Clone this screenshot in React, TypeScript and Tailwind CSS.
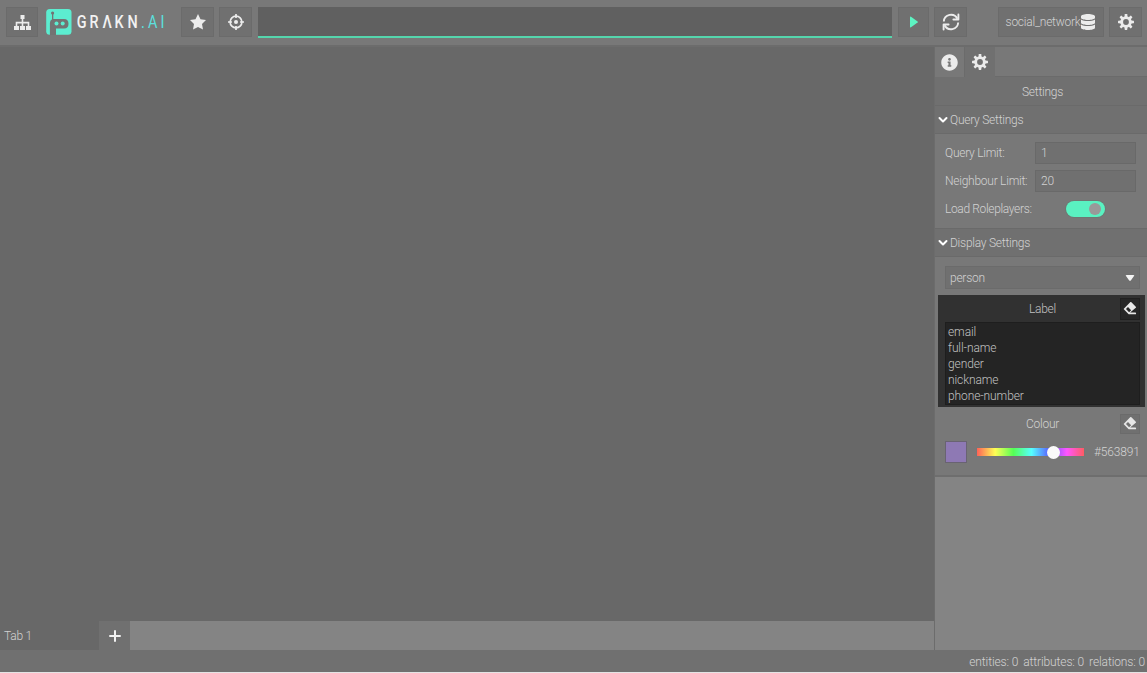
import { ReactNode } from 'react';
import { FaDatabase, FaInfoCircle } from 'react-icons/fa';

function Cog() {
  return (
    <svg width="16" height="16" viewBox="0 0 16 16" className="fill-[#ececec]">
      <path fillRule="evenodd" d="M8 2.200a5.800 5.800 0 1 0 0 11.600A5.800 5.800 0 0 0 8 2.200Zm0 2.900a2.900 2.900 0 1 1 0 5.800 2.900 2.900 0 0 1 0-5.800Z" />
      {[0, 45, 90, 135, 180, 225, 270, 315].map((angle) => (
        <path key={angle} transform={`rotate(${angle} 8 8)`} d="M6.500 3 6.700.4Q6.800 0 7.200 0h1.600q.4 0 .5.400L9.500 3Z" />
      ))}
    </svg>
  );
}

function Eraser() {
  return (
    <svg width="14" height="14" viewBox="0 0 16 16" className="fill-[#e6e6e6]">
      <path fillRule="evenodd" d="M8.2 12H14a1 1 0 0 1 0 2H7a1 1 0 0 1-.8-.3l-5-5a1 1 0 0 1 0-1.4l7-7a1 1 0 0 1 1.400 0l5 5a1 1 0 0 1 0 1.400ZM3.400 8 7 11.600 9.300 9.300 5.700 5.700Z" />
    </svg>
  );
}

function Chevron() {
  return (
    <svg width="10" height="8" viewBox="0 0 10 8" className="fill-none stroke-white stroke-2">
      <path d="m1.500 2 3.500 3.500L8.500 2" strokeLinecap="round" strokeLinejoin="round" />
    </svg>
  );
}

function Logo() {
  return (
    <svg width="120" height="29" viewBox="0 0 120 29">
      <rect x="0.200" y="2" width="25.300" height="25.800" rx="3.500" fill="#5cedd0" />
      <g fill="#737373">
        <circle cx="6.600" cy="6" r="1.600" />
        <path d="M6 6h1.300v6H18q4.500 0 4.500 4.800t-4.500 4.700h-8V28H3.900V16q0-2.800 2.100-3.700Z" />
      </g>
      <circle cx="10.500" cy="16.500" r="2" fill="#5cedd0" />
      <circle cx="16.700" cy="16.500" r="2" fill="#5cedd0" />
      <g transform="scale(.8 1)" fontFamily="Roboto, sans-serif" fontSize="18" fontWeight="500">
        <text x="38.300 54.500 70.500 85.500 102" y="21.500" fill="#f2f2f2">GRΛKN</text>
        <text x="118.900 127.500 143" y="21.500" fill="#5ce0df" fontWeight="400">.AI</text>
      </g>
    </svg>
  );
}

function ToolButton({ label, className = 'w-8', children }: { label: string; className?: string; children: ReactNode }) {
  return (
    <button aria-label={label} className={`flex h-[30px] shrink-0 items-center justify-center border border-[#6b6b6b] bg-[#707070] ${className}`}>
      {children}
    </button>
  );
}

function SectionHeader({ children }: { children: ReactNode }) {
  return (
    <div className="flex h-[29px] shrink-0 items-center gap-[2px] border-y border-[#6a6a6a] bg-[#707070] pl-[3px]">
      <Chevron />
      <span>{children}</span>
    </div>
  );
}

function Field({ label, value }: { label: string; value: string }) {
  return (
    <div className="flex h-[28px] items-center">
      <span className="w-[90px] whitespace-nowrap">{label}</span>
      <div className="flex h-[22px] w-[101px] items-center border border-[#696969] bg-[#707070] pl-[5px]">{value}</div>
    </div>
  );
}

export default function App() {
  return (
    <div className="flex h-[673px] w-[1147px] flex-col overflow-hidden border-b border-[#e4e4e4] bg-[#686868] font-[Roboto,sans-serif] text-[12px] font-light leading-4 tracking-[-0.25px] text-[#d2d2d2]">
      <header className="flex h-[47px] shrink-0 items-start border-b-2 border-[#6c6c6c] bg-[#787878] pl-[6px] pt-[7px]">
        <ToolButton label="Types">
          <svg width="17" height="17" viewBox="0 0 17 17" fill="#ececec"><path d="M6.500 1h4v4h-4zM0 12h5v4H0zM6 12h5v4H6zM12 12h5v4h-5zM7.700 5h1.600v2.800h6V12h-1.600V9.400H9.300V12H7.700V9.400H3.300V12H1.700V7.800h6z" /></svg>
        </ToolButton>
        <div className="ml-2 w-[135px] shrink-0"><Logo /></div>
        <ToolButton label="Favourites" className="w-[33px]">
          <svg width="16" height="16" viewBox="0 0 16 16" fill="#ececec"><path d="m8 0 2.500 5.200 5.500.8-4 3.900 1 5.600L8 12.900l-5 2.600 1-5.600L0 6l5.500-.8Z" /></svg>
        </ToolButton>
        <ToolButton label="Centre" className="ml-[5px] w-[33px]">
          <svg width="16" height="16" viewBox="0 0 16 16" fill="none" stroke="#ececec" strokeWidth="1.700"><circle cx="8" cy="8" r="5.900" /><circle cx="8" cy="8" r="2" fill="#ececec" stroke="none" /><path d="M8 0v4M8 12v4M0 8h4M12 8h4" /></svg>
        </ToolButton>
        <div className="ml-[6px] h-[31px] w-[634px] shrink-0 border-b-2 border-[#55d6ad] bg-[#606060]" />
        <ToolButton label="Run" className="ml-[6px] w-[31px]">
          <svg width="10" height="12" viewBox="0 0 10 12" fill="#5df3c2"><path d="M1 1.200q0-1 1-.5l6.600 4.700q.7.600 0 1.200L2 11.300q-1 .5-1-.5Z" /></svg>
        </ToolButton>
        <ToolButton label="Refresh" className="ml-[5px] w-[33px]">
          <svg width="18" height="18" viewBox="0 0 18 18" fill="none" stroke="#ececec" strokeWidth="1.900"><path d="M1.800 8.500a7.200 7.200 0 0 1 13.600-2.800M16.200 9.500A7.200 7.200 0 0 1 2.600 12.300" /><path d="M16.400 1.500v5h-5M1.600 16.500v-5h5" strokeLinecap="round" strokeLinejoin="round" /></svg>
        </ToolButton>
        <ToolButton label="Keyspace" className="ml-[31px] w-[106px]">
          <span>social_network</span><FaDatabase size={16} color="#ececec" />
        </ToolButton>
        <ToolButton label="Preferences" className="ml-[5px] w-[33px]"><Cog /></ToolButton>
      </header>

      <div className="flex h-[603px] shrink-0">
        <main className="flex w-[934px] flex-col bg-[#686868]">
          <div className="grow" />
          <div className="flex h-[29px] bg-[#848484]">
            <div className="flex w-[99px] items-center bg-[#686868] pl-1">Tab 1</div>
            <button aria-label="Add tab" className="flex w-[31px] items-center justify-center bg-[#707070]">
              <svg width="12" height="12" viewBox="0 0 12 12" stroke="#f2f2f2" strokeWidth="2" strokeLinecap="round"><path d="M6 1v10M1 6h10" /></svg>
            </button>
          </div>
        </main>

        <aside className="flex w-[213px] flex-col border-l border-[#6c6c6c] bg-[#848484]">
          <div className="flex h-[30px] shrink-0 bg-[#787878]">
            <button aria-label="Info" className="flex w-[30px] items-center justify-center border-r border-[#6b6b6b]"><FaInfoCircle size={17} color="#ececec" /></button>
            <button aria-label="Settings" className="flex w-[30px] items-center justify-center bg-[#707070]"><Cog /></button>
            <div className="grow border-b border-[#6b6b6b]" />
          </div>
          <div className="flex h-[28px] shrink-0 items-center justify-center bg-[#707070] pl-[3px] pt-px">Settings</div>
          <SectionHeader>Query Settings</SectionHeader>
          <div className="h-[94px] shrink-0 bg-[#787878] pl-[10px] pt-[5px]">
            <Field label="Query Limit:" value="1" />
            <Field label="Neighbour Limit:" value="20" />
            <div className="flex h-[28px] items-center">
              <span className="w-[121px] tracking-[-0.35px]">Load Roleplayers:</span>
              <div className="flex h-4 w-[39px] items-center justify-end rounded-full bg-[#5af1c1] pr-[4px] ring-1 ring-[#6e7773]"><span className="size-3 rounded-full bg-[#999]" /></div>
            </div>
          </div>
          <SectionHeader>Display Settings</SectionHeader>
          <div className="h-[220px] shrink-0 border-b-2 border-[#6e6e6e] bg-[#787878] pt-[9px]">
            <div className="ml-[10px] flex h-[23px] w-[195px] items-center justify-between border border-[#6b6b6b] bg-[#707070] pl-[4px] pr-1">
              person
              <svg width="10" height="6" viewBox="0 0 10 6" fill="#f4f4f4"><path d="M1.500 0h7q1.300 0 .5 1L6 5.300q-1 1-2 0L1 1Q.2 0 1.500 0Z" /></svg>
            </div>
            <div className="ml-[3px] mt-[6px] h-[112px] w-[207px] bg-[#313131] pl-[7px] pr-[5px] pt-[3px] text-[#c2c2c2]">
              <div className="grid h-[22px] grid-cols-[1fr_20px] items-center">
                <span className="pl-[20px] text-center">Label</span>
                <button aria-label="Clear label" className="flex h-[22px] items-center justify-center border border-[#202020] bg-[#262626]"><Eraser /></button>
              </div>
              <ul className="mt-[2px] h-[83px] border border-[#1e1e1e] bg-[#242424] pl-[2px] pt-[1px] tracking-[-0.1px]">
                {['email', 'full-name', 'gender', 'nickname', 'phone-number'].map((name) => <li key={name}>{name}</li>)}
              </ul>
            </div>
            <div className="ml-[10px] mt-[7px] grid h-[20px] w-[195px] grid-cols-[1fr_20px] items-center">
              <span className="pl-[20px] text-center">Colour</span>
              <button aria-label="Reset colour" className="flex h-[20px] items-center justify-center border border-[#6b6b6b] bg-[#707070]"><Eraser /></button>
            </div>
            <div className="ml-[10px] mt-[7px] flex h-[22px] items-center">
              <div className="size-[22px] border border-[#696372] bg-[#8e79b4]" />
              <div className="ml-[9px] flex h-[10px] w-[109px] items-center border border-[#777] bg-[linear-gradient(90deg,#ff6257,#ffff55_17%,#55ff55_34%,#55ffff_51%,#5a5aff_68%,#ff55ff_84%,#ff5c62)] pl-[70px]">
                <span className="size-[13px] shrink-0 rounded-full bg-[#fafafa]" />
              </div>
              <span className="ml-[9px] tracking-[-0.15px]">#563891</span>
            </div>
          </div>
        </aside>
      </div>
      <footer className="flex h-[22px] shrink-0 items-center justify-end gap-[5px] bg-[#707070] pr-[2px] pt-[2px] tracking-[-0.12px]">
        <span>entities: 0</span><span>attributes: 0</span><span>relations: 0</span>
      </footer>
    </div>
  );
}
